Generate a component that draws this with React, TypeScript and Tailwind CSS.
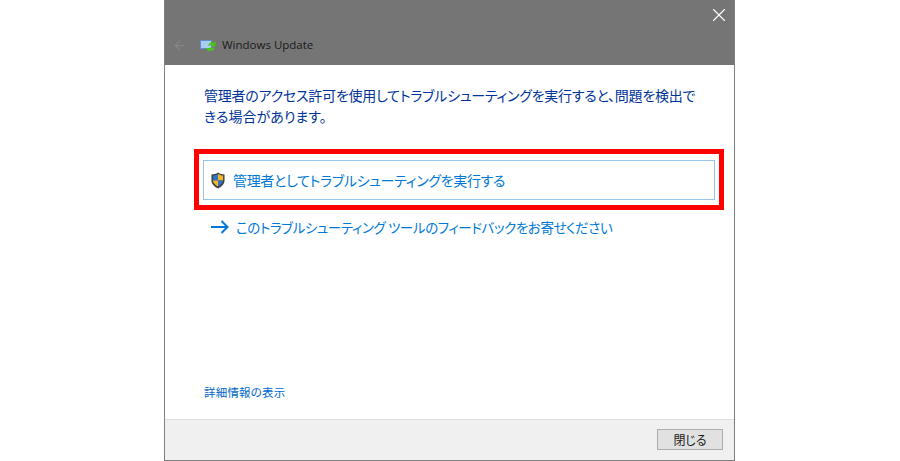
import React from 'react';
import { ArrowLeft, X } from 'lucide-react';

const cjk = "font-['Noto_Sans_CJK_JP','Noto_Sans',sans-serif] [font-feature-settings:'palt']";

const UpdateIcon = () => (
  <svg width="17" height="11" viewBox="0 0 17 11" className="shrink-0">
    <rect x="0" y="0" width="12" height="9" fill="#5f8fc8" />
    <rect x="1" y="1" width="10" height="7" fill="#a9cdf0" />
    <path d="M8 5l4-4 1 2 3-2-1 6-4-1 1-1-1-1-1 2zM6 8h4l1-1 1 1 2-1 0 4-2-1-1 1H8z" fill="#4cc21c" />
  </svg>
);

const ShieldIcon = () => (
  <svg width="14" height="17" viewBox="0 0 15 18" className="shrink-0">
    <path d="M7.5 0.5C5.5 2 3 2.500 0.500 2.700V9c0 4 3.500 7 7 8.500 3.500-1.500 7-4.500 7-8.500V2.700C12 2.500 9.500 2 7.500 0.500Z" fill="#3a3f45" />
    <path d="M7.500 2C6 3 4 3.500 2 3.700V9h5.500Z" fill="#2f74c0" />
    <path d="M7.500 2V9H13V3.700C11 3.500 9 3 7.500 2Z" fill="#f4b52e" />
    <path d="M2 9c0.300 3 3 5.200 5.500 6.400V9Z" fill="#f4b52e" />
    <path d="M13 9c-0.300 3-3 5.200-5.500 6.400V9Z" fill="#2f74c0" />
  </svg>
);

const LinkArrow = () => (
  <svg width="18" height="14" viewBox="0 0 18 14" className="shrink-0" fill="none" stroke="#0078d7" strokeWidth="2">
    <path d="M0 7H16.500M10.500 1l6 6-6 6" />
  </svg>
);

export default function App() {
  return (
    <div className="flex pl-[164px] w-[900px] h-[461px] bg-white overflow-hidden">
      <div className={`flex flex-col w-[571px] h-[461px] border-x border-b border-[#7f7f7f] ${cjk}`}>
        {/* Title bar */}
        <header className="h-[65px] shrink-0 bg-[#757575] flex flex-col pl-[7px] pr-[4px]">
          <div className="flex justify-end pt-[4px]">
            <X size={22} strokeWidth={1.2} className="text-white" />
          </div>
          <div className="flex items-center mt-[10px] h-[18px]">
            <ArrowLeft size={15} strokeWidth={2} className="text-[#858585] mr-[13px]" />
            <UpdateIcon />
            <span className="ml-[5px] text-[11.500px] text-[#1a1a1a] font-['Open_Sans','Noto_Sans',sans-serif]">Windows Update</span>
          </div>
        </header>

        {/* Content */}
        <main className="flex-1 flex flex-col pt-[20px]">
          <p className="mx-[39px] text-[14px] leading-[21px] text-[#003399] whitespace-nowrap">
            <span className="tracking-[-0.25px]">管理者のアクセス許可を使用してトラブルシューティングを実行すると、問題を検出で</span>
            <br />
            きる場合があります。
          </p>

          <div className="ml-[29px] mr-[10px] mt-[22px] border-[5px] border-[#ff0000] px-[4px] pt-[6px] pb-[5px]">
            <button className="w-full h-[40px] flex items-center border border-[#98c4e8] pl-[7px] text-[14px] tracking-[-0.33px] text-[#0078d7]">
              <ShieldIcon />
              <span className="ml-[8px]">管理者としてトラブルシューティングを実行する</span>
            </button>
          </div>

          <a className="mx-[46px] mt-[7px] h-[20px] flex items-center text-[13.500px] tracking-[-0.4px] text-[#0078d7] whitespace-nowrap">
            <LinkArrow />
            <span className="ml-[7px]">このトラブルシューティング ツールのフィードバックをお寄せください</span>
          </a>

          <a className="mx-[39px] mt-auto mb-[19px] text-[11.500px] leading-[16px] tracking-[0.2px] text-[#0066cc]">詳細情報の表示</a>
        </main>

        {/* Footer */}
        <footer className="h-[41px] shrink-0 bg-[#f0f0f0] border-t border-[#dfdfdf] flex justify-end items-start pt-[9px] pr-[11px]">
          <button className="w-[66px] h-[21px] bg-[#e1e1e1] border border-[#adadad] text-[12px] leading-[19px] text-[#1a1a1a]">閉じる</button>
        </footer>
      </div>
    </div>
  );
}
